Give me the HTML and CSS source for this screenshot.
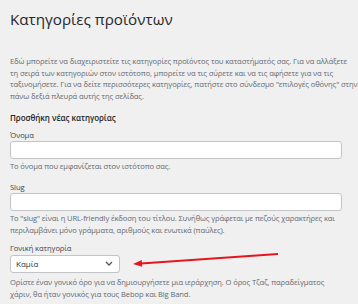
FILE: index.html
```html
<!DOCTYPE html>
<html lang="el">
<head>
	<meta charset="UTF-8">
	<title>Κατηγορίες προϊόντων</title>
	<meta name="viewport" content="width=device-width, initial-scale=1.0">
	<link rel="stylesheet" href="styles.css">
</head>
<body>
	<div class="page">
		<h1 class="page--title">Κατηγορίες προϊόντων</h1>

		<p class="page--intro">Εδώ μπορείτε να διαχειριστείτε τις κατηγορίες προϊόντος του καταστήματός σας. Για να αλλάξετε τη&nbsp;σειρά των κατηγοριών στον ιστότοπο, μπορείτε να τις σύρετε και να τις αφήσετε για να τις ταξινομήσετε. Για να δείτε περισσότερες κατηγορίες, πατήστε στο σύνδεσμο "επιλογές οθόνης" στην πάνω δεξιά πλευρά αυτής της σελίδας.</p>

		<h2 class="form--title">Προσθήκη νέας κατηγορίας</h2>

		<div class="field field--name">
			<label class="field--label" for="tagName">Όνομα</label>
			<input class="field--input" type="text" id="tagName">
			<p class="field--help">Το όνομα που εμφανίζεται στον ιστότοπο σας.</p>
		</div>

		<div class="field field--slug">
			<label class="field--label" for="tagSlug">Slug</label>
			<input class="field--input" type="text" id="tagSlug">
			<p class="field--help">Το "slug" είναι η URL-friendly έκδοση του τίτλου. Συνήθως γράφεται με πεζούς χαρακτήρες και περιλαμβάνει μόνο γράμματα, αριθμούς και ενωτικά (παύλες).</p>
		</div>

		<div class="field field--parent">
			<label class="field--label">Γονική κατηγορία</label>
			<div class="select">
				<span class="select--value">Καμία</span>
				<svg class="select--chevron" width="8" height="5" viewBox="0 0 8 5">
					<path d="M1 1 L4 4 L7 1" fill="none" stroke="#50575e" stroke-width="1.3"/>
				</svg>
			</div>
			<p class="field--help">Ορίστε έναν γονικό όρο για να δημιουργήσετε μια ιεράρχηση. Ο όρος Τζαζ, παραδείγματος χάριν, θα ήταν γονικός για τους Bebop και Big Band.</p>

			<!-- red arrow pointing at the select -->
			<svg class="pointer" width="152" height="22" viewBox="0 0 152 22">
				<line x1="148" y1="6" x2="11" y2="15.45" stroke="#e5161d" stroke-width="2"/>
				<polygon points="3,16 12.22,18.87 11.74,11.89" fill="#e5161d"/>
			</svg>
		</div>
	</div>
</body>
</html>
```

FILE: styles.css
```css
body {
	margin: 0;
	background: #f0f0f1;
	font-family: "Open Sans", sans-serif;
	color: #3c434a;
}

.page {
	padding: 8px 0 0 10px;
	width: 348px;
}

.page--title {
	margin: 0;
	font-size: 15.2px;
	font-weight: 400;
	line-height: 22px;
	color: #23282d;
}

.page--intro {
	margin: 26px 0 0 0;
	font-size: 7.6px;
	letter-spacing: -0.11px;
	line-height: 11.7px;
	color: #646970;
}

.form--title {
	margin: 8px 0 0 0;
	font-size: 8px;
	font-weight: 600;
	letter-spacing: -0.05px;
	line-height: 14px;
	color: #1d2327;
}

.field--name {
	margin-top: 4px;
}

.field--slug {
	margin-top: 9px;
}

.field--parent {
	position: relative;
	margin-top: 6px;
}

.field--label {
	display: block;
	font-size: 7.6px;
	letter-spacing: -0.1px;
	line-height: 12px;
	color: #3c434a;
}

.field--input {
	display: block;
	box-sizing: border-box;
	width: 332px;
	height: 18px;
	margin: 0;
	border: 1px solid #c3c4c7;
	border-radius: 3px;
	background: #fff;
}

.field--help {
	width: 332px;
	margin: 1px 0 0 0;
	font-size: 7.6px;
	letter-spacing: -0.12px;
	line-height: 12px;
	color: #646970;
}

.select {
	display: flex;
	justify-content: space-between;
	align-items: center;
	box-sizing: border-box;
	width: 110px;
	height: 18px;
	margin-top: 1px;
	padding: 0 6px 0 5px;
	border: 1px solid #c3c4c7;
	border-radius: 3px;
	background: #fff;
}

.select--value {
	font-size: 8px;
	color: #2c3338;
}

.select + .field--help {
	margin-top: 3px;
}

.pointer {
	position: absolute;
	left: 120px;
	top: 6px;
}
```
